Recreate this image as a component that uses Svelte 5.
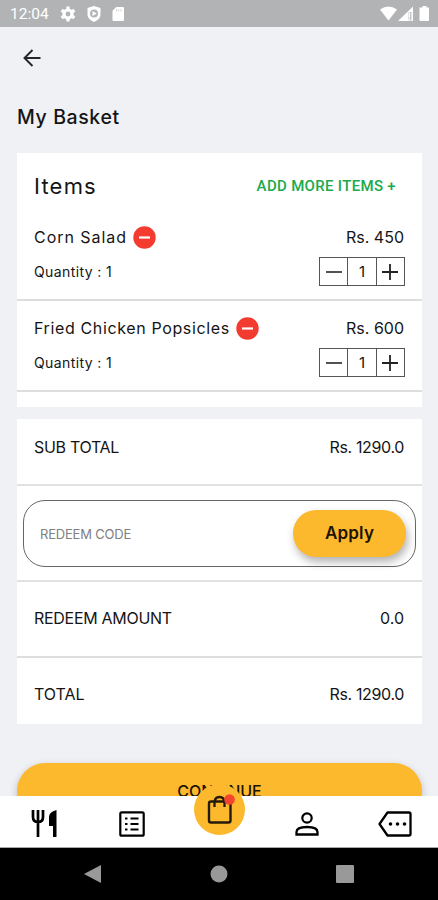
<script>
  const items = [
    { name: 'Corn Salad', price: 'Rs. 450', quantity: 1, kind: 'short' },
    { name: 'Fried Chicken Popsicles', price: 'Rs. 600', quantity: 1, kind: 'long' }
  ];
</script>

<div class="screen">
  <header class="status">
    <span class="clock">12:04</span>
    <svg class="gear" width="16" height="16" viewBox="0 0 16 16"><circle cx="8" cy="8" r="4" fill="none" stroke="#fff" stroke-width="3.200"/><path d="M8 .5v3M8 12.500v3M1.500 4.250l2.600 1.500M11.900 10.250l2.600 1.500M1.500 11.750l2.600-1.500M11.900 5.750l2.600-1.500" stroke="#fff" stroke-width="3.200"/></svg>
    <svg class="shield" width="16" height="18" viewBox="0 0 16 18"><path fill="#fff" d="M8 1l6.500 2v6c0 4-2.500 6-6.500 8-4-2-6.500-4-6.500-8V3z"/><circle cx="8" cy="8.500" r="4" fill="#b2b4b5"/><path fill="#fff" d="M6.500 5.900v5.200l4.300-2.600z"/></svg>
    <svg class="card-icon" width="12" height="16" viewBox="0 0 12 16"><path fill="#fff" d="M4.300 1H11q1 0 1 1v12q0 1-1 1H1.500q-1 0-1-1V4.800z"/><path d="M4.500 3v2.500M6.700 3v2.500M8.900 3v2.500" stroke="#d8d9da"/></svg>
    <span class="spacer"></span>
    <svg width="50" height="16" viewBox="0 0 50 16"><path fill="#fff" d="M0 3.500Q8.500-2.500 17 3.500L8.500 14.500z"/><path fill="#fff" d="M18 15L33 .500V15z"/><path d="M30 6v8.500" stroke="#c4c5c7" stroke-width="3"/><path d="M29.500 6.500v5m0 1v2" stroke="#fff"/><path fill="#fff" d="M42.500 0h4v1.500H49V14q0 1-1 1h-7.500q-1 0-1-1V1.500h3z"/></svg>
  </header>

  <main>
    <svg class="back" width="18" height="18" viewBox="0 0 18 18"><path d="M17.500 9H2M9.500 1L1.500 9l8 8" fill="none" stroke="#252628" stroke-width="1.900"/></svg>
    <h1>My Basket</h1>

    <section class="basket">
      <div class="head"><h2>Items</h2><span class="add">ADD MORE ITEMS +</span></div>
      {#each items as item}
        <article>
          <div class="line">
            <span class="name {item.kind}">{item.name}</span>
            <svg class="remove" width="23" height="23" viewBox="0 0 23 23"><circle cx="11.500" cy="11.500" r="11.200" fill="#f43b30"/><path d="M6 11.500h11" stroke="#fff" stroke-width="2.200"/></svg>
            <span class="price">{item.price}</span>
          </div>
          <div class="line second">
            <span class="qty">Quantity : {item.quantity}</span>
            <div class="stepper">
              <span><svg width="16" height="16" viewBox="0 0 16 16"><path d="M0 8h16" stroke="#333" stroke-width="1.700"/></svg></span>
              <span>{item.quantity}</span>
              <span><svg width="16" height="16" viewBox="0 0 16 16"><path d="M0 8h16M8 0v16" stroke="#222" stroke-width="1.800"/></svg></span>
            </div>
          </div>
        </article>
      {/each}
    </section>

    <section class="summary">
      <div class="row sub"><span class="l1">SUB TOTAL</span><span class="amount">Rs. 1290.0</span></div>
      <div class="redeem">
        <div class="field"><span class="hint">REDEEM CODE</span><button class="apply">Apply</button></div>
      </div>
      <div class="row discount"><span class="l2">REDEEM AMOUNT</span><span class="zero">0.0</span></div>
      <div class="row total"><span class="l3">TOTAL</span><span class="amount">Rs. 1290.0</span></div>
    </section>

    <button class="continue">CONTINUE</button>
  </main>

  <nav class="tabs">
    <svg style:margin-left="31px" width="27" height="28" viewBox="0 0 27 28"><path d="M2 0v7q0 5 5 5t5-5V0M7 0v27" fill="none" stroke="#000" stroke-width="2.700"/><path d="M25.500 0v27h-3.500V16H18V7q0-5 7.500-7z"/></svg>
    <svg style:margin-left="61px" width="26" height="26" viewBox="0 0 26 26"><rect x="1.300" y="1.300" width="23.400" height="23.400" rx="1.500" fill="none" stroke="#000" stroke-width="2.200"/><path d="M6 7.500h2.500m3 0h8M6 13h2.500m3 0h8M6 18.500h2.500m3 0h8" stroke="#000" stroke-width="2.200"/></svg>
    <svg style:margin-left="150px" width="24" height="24" viewBox="0 0 24 24"><circle cx="12" cy="6" r="4.700" fill="none" stroke="#000" stroke-width="2.200"/><path d="M1.500 22.500V20q0-5 10.500-5t10.500 5v2.500z" fill="none" stroke="#000" stroke-width="2.300"/></svg>
    <svg style:margin-left="59px" width="34" height="26" viewBox="0 0 34 26"><path d="M9.500 1.500H31q1.500 0 1.500 1.500v20q0 1.500-1.500 1.500H9.500L1.500 13z" fill="none" stroke="#000" stroke-width="2.300" stroke-linejoin="round"/><g><circle cx="12.500" cy="13" r="1.800"/><circle cx="19.500" cy="13" r="1.800"/><circle cx="26.500" cy="13" r="1.800"/></g></svg>
    <div class="bag">
      <svg width="51" height="51" viewBox="0 0 51 51"><rect x="15" y="17.500" width="21.500" height="21" rx="2" fill="none" stroke="#251a08" stroke-width="2.400"/><path d="M20.500 23v-4q0-6 5-6t5 6v4" fill="none" stroke="#251a08" stroke-width="2.300"/><circle cx="35.500" cy="15.500" r="5.300" fill="#f4432f"/></svg>
    </div>
  </nav>

  <footer>
    <svg width="18" height="18" viewBox="0 0 18 18"><path fill="#999" d="M0 9L17 0v18z"/></svg>
    <svg width="18" height="18" viewBox="0 0 18 18"><circle cx="9" cy="9" r="8.500" fill="#999"/></svg>
    <svg width="18" height="18" viewBox="0 0 18 18"><rect width="18" height="18" rx="1" fill="#999"/></svg>
  </footer>
</div>

<style>
  :global(body) { margin: 0; }
  .screen { width: 438px; height: 900px; display: flex; flex-direction: column; overflow: hidden; background: #eff1f5; color: #151515; font-family: Inter, "Noto Sans", sans-serif; }
  .screen * { box-sizing: border-box; }
  svg { display: block; flex: none; }
  span, h1, h2 { white-space: nowrap; }
  .status { flex: none; height: 27px; padding: 0 8px 0 10px; background: #b2b3b5; display: flex; align-items: center; color: #fff; }
  .clock { width: 39px; font: 15.500px/27px Roboto, sans-serif; padding-top: 1px; }
  .gear { margin-left: 11px; }
  .shield { margin-left: 10px; }
  .card-icon { margin-left: 10px; }
  .spacer { flex: 1; }
  main { height: 769px; flex: none; padding: 0 16px 0 17px; display: flex; flex-direction: column; overflow: hidden; }
  .back { margin: 22px 0 0 6px; }
  h1 { margin: 35px 0 0 0; height: 30px; font-size: 19.500px; line-height: 30px; font-weight: 500; letter-spacing: .6px; }
  section { background: #fff; flex: none; }
  .basket { margin-top: 21px; height: 254px; }
  .head { display: flex; justify-content: space-between; align-items: center; padding: 0 26px 0 17px; height: 65px; }
  h2 { margin: 0; font-size: 22px; font-weight: 400; letter-spacing: 1.200px; }
  .add { color: #20a94b; font: 500 15px Roboto, sans-serif; letter-spacing: .32px; }
  article { height: 91px; padding: 0 17px; border-bottom: 2px solid #dcdddd; }
  .head + article { height: 83px; }
  .line { display: flex; align-items: center; }
  .line:first-child { height: 54px; }
  .head + article .line:first-child { height: 38px; }
  .name { font-size: 16px; }
  .short { letter-spacing: .95px; }
  .long { letter-spacing: .63px; }
  .remove { margin-left: 6px; }
  .price { margin-left: auto; font-size: 16px; margin-right: 1px; }
  .line.second { height: 29px; justify-content: space-between; margin-top: -7px; }
  .head + article .line.second { margin-top: 1px; }
  .qty { font-size: 14px; letter-spacing: .4px; }
  .stepper { width: 86px; height: 29px; display: flex; border: 1px solid #555; }
  .stepper span { flex: 1; display: flex; align-items: center; justify-content: center; font-size: 15px; }
  .stepper span + span { border-left: 1px solid #555; }
  .summary { margin-top: 12px; height: 305px; }
  .row { display: flex; align-items: center; justify-content: space-between; padding: 0 18px 0 17px; font-size: 16px; }
  .amount { letter-spacing: -.35px; }
  .l1, .l2 { letter-spacing: -.3px; }
  .sub { height: 67px; padding-bottom: 10px; border-bottom: 2px solid #e0e1e1; }
  .redeem { height: 96px; padding: 14px 6px; border-bottom: 2px solid #e0e1e1; }
  .field { height: 67px; border: 1px solid #666; border-radius: 22px; display: flex; align-items: center; justify-content: space-between; padding: 0 9px 0 16px; }
  .hint { font-size: 13px; letter-spacing: -.2px; color: #808080; }
  .apply { width: 113px; height: 47px; border: 0; border-radius: 23px; background: #fdb92e; color: #1d1300; font: 600 17px Inter, sans-serif; letter-spacing: .2px; padding: 0 0 2px; box-shadow: 2px 5px 9px rgba(0,0,0,.3); }
  .discount { height: 76px; padding-bottom: 2px; border-bottom: 2px solid #dcdddd; }
  .total { height: 66px; padding-top: 6px; }
  .continue { flex: none; margin-top: 39px; height: 56px; border: 0; border-radius: 28px; background: #fdb92e; box-shadow: 0 3px 9px rgba(0,0,0,.22); color: #1d1300; font: 500 16px Inter, sans-serif; }
  .tabs { flex: none; position: relative; height: 52px; background: #fff; border-bottom: 1px solid #aaa; display: flex; align-items: center; padding-top: 4px; }
  .bag { position: absolute; left: 194px; top: -12px; width: 51px; height: 51px; border-radius: 50%; background: #fdb92e; }
  footer { flex: 1; background: #000; display: flex; align-items: center; justify-content: space-between; padding: 0 84px; }
</style>
